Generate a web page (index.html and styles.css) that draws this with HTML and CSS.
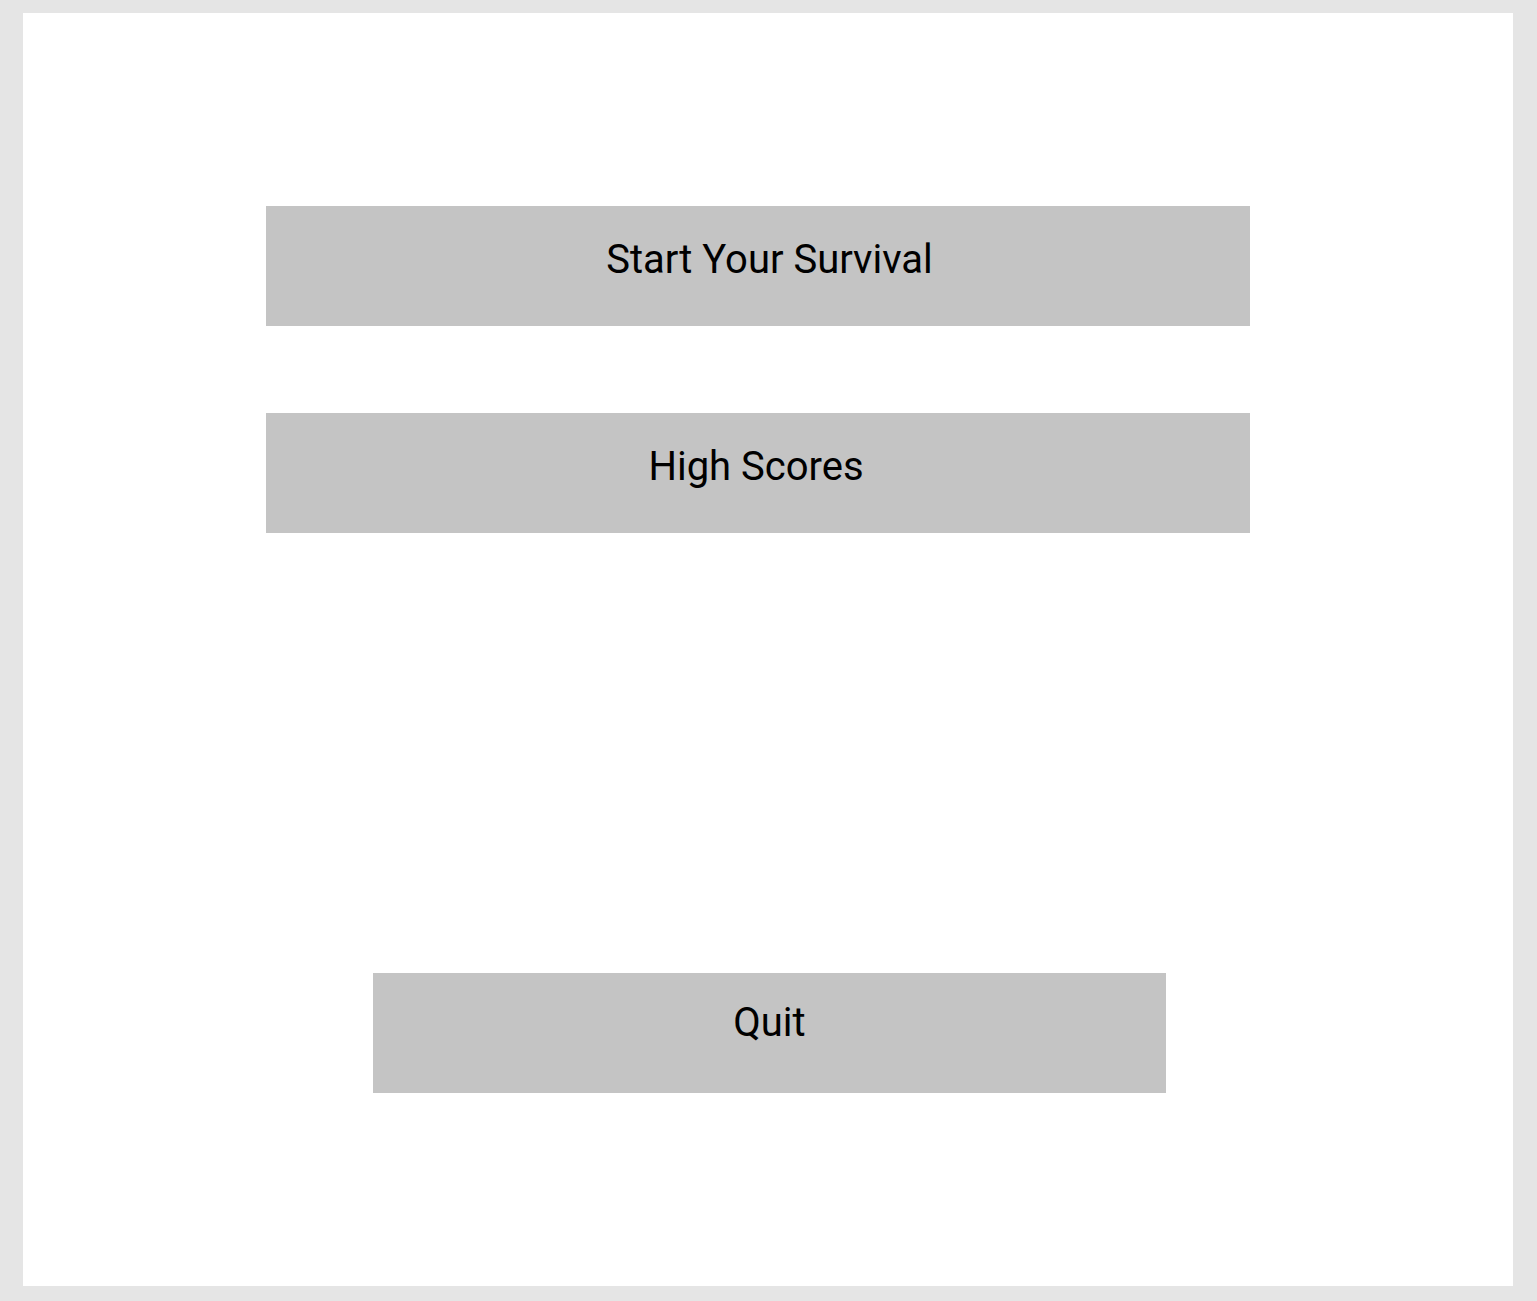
FILE: index.html
```html
<!DOCTYPE html>
<html>
<head>
<meta charset="utf-8">
<link rel="stylesheet" href="styles.css">
</head>
<body>
<main class="panel">
  <div class="btn btn-wide btn-start">Start Your Survival</div>
  <div class="btn btn-wide btn-scores">High Scores</div>
  <div class="btn btn-quit">Quit</div>
</main>
</body>
</html>
```
FILE: styles.css
```css
html, body {
  margin: 0;
  padding: 0;
}
body {
  background: #e5e5e5;
  width: 1537px;
  height: 1301px;
  padding: 13px 24px 15px 23px;
  box-sizing: border-box;
  font-family: Roboto, "Liberation Sans", sans-serif;
}
.panel {
  background: #ffffff;
  width: 1490px;
  height: 1273px;
  display: flex;
  flex-direction: column;
  align-items: flex-start;
}
.btn {
  background: #c4c4c4;
  color: #000;
  height: 120px;
  box-sizing: border-box;
  padding-top: 30px;
  font-size: 40px;
  line-height: normal;
  text-align: center;
}
.btn-wide {
  width: 984px;
  margin-left: 243px;
}
.btn-start {
  margin-top: 193px;
  padding-left: 23px;
}
.btn-scores {
  margin-top: 87px;
  padding-right: 4px;
}
.btn-quit {
  width: 793px;
  margin-left: 350px;
  margin-top: 440px;
  padding-top: 26px;
}
```
